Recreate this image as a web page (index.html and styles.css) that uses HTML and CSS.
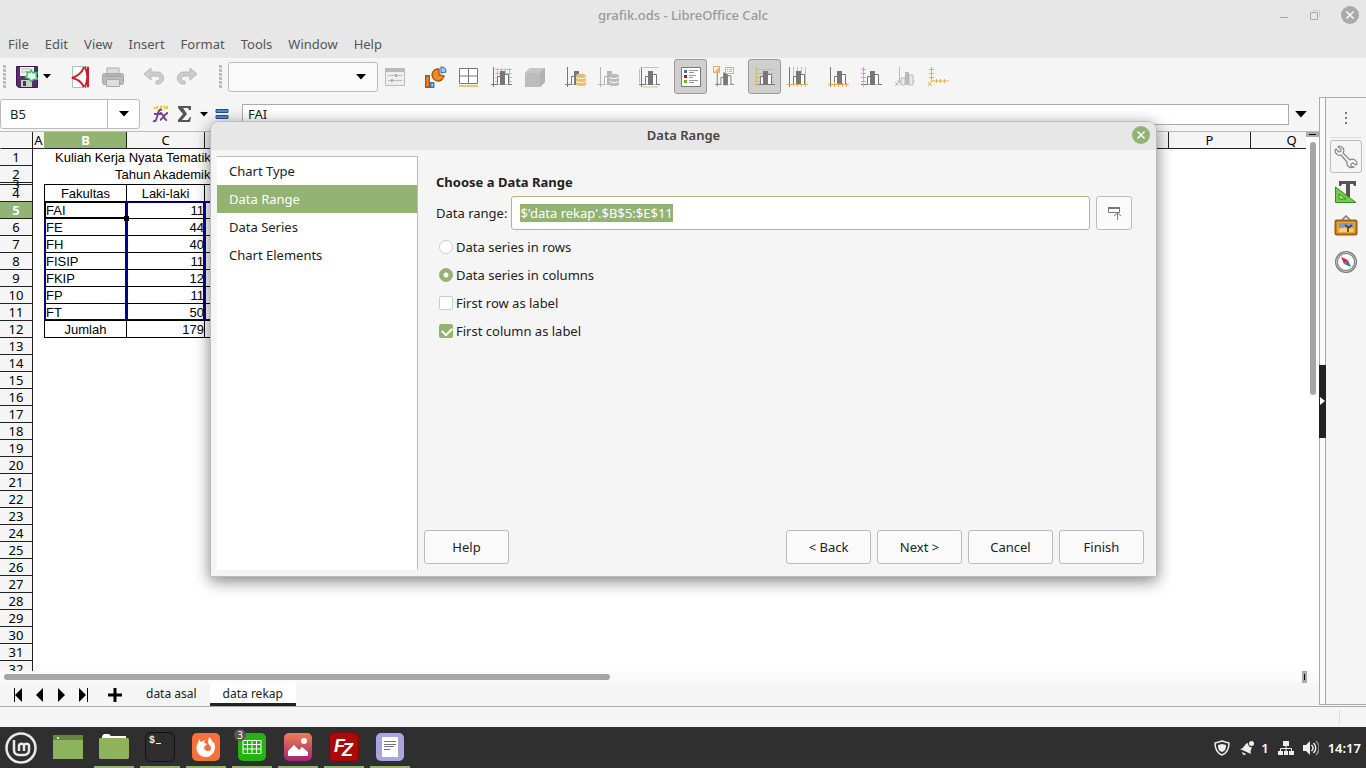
FILE: index.html
```html
<!DOCTYPE html>
<html lang="en">
  <head>
    <meta charset="UTF-8" />
    <meta name="viewport" content="width=device-width, initial-scale=1.0" />
    <title>grafik.ods - LibreOffice Calc</title>
    <link rel="stylesheet" href="styles.css">
  </head>
  <body>
    <svg class="symbols" aria-hidden="true">
      <symbol id="axes" viewBox="0 0 22 22">
        <path d="M2.5 1v20M0 18.500h21" fill="none" stroke="#777" />
      </symbol>
      <symbol id="bars" viewBox="0 0 22 22">
        <path d="M6.500 18.500v-8h4v8M13.500 18.500v-10h4v10" fill="#fff" stroke="#777" />
        <path d="M9 5h5v14H9z" fill="#777" />
      </symbol>
      <symbol id="database" viewBox="0 0 22 22">
        <path d="M11 10c0-3 10-3 10 0v9c0 3-10 3-10 0z" />
        <path d="M11 11c1 2 9 2 10 0M11 15c1 2 9 2 10 0M11 19c1 2 9 2 10 0" fill="none" stroke="#fff" />
      </symbol>
      <symbol id="arrow" viewBox="0 0 10 6">
        <path d="M0 0h10L5 5.500z" />
      </symbol>
    </svg>

    <header class="titlebar">
      <h1 class="window-title">grafik.ods - LibreOffice Calc</h1>
      <div class="window-buttons">
        <button aria-label="Minimize"><svg width="10" height="18"><path d="M1 11.500h8" stroke="#aaa" /></svg></button>
        <button aria-label="Maximize"><svg width="12" height="18" fill="none" stroke="#bbb"><path d="M4 4.500h6.500V11" stroke="#ccc" /><path d="M1.500 6.500h7v7h-7z" stroke="#aaa" /></svg></button>
        <button aria-label="Close"><svg width="18" height="18"><circle cx="9" cy="9" r="9" fill="#aaa" /><path d="M5.500 5.500l7 7M12.500 5.500l-7 7" stroke="#fff" stroke-width="1.500" /></svg></button>
      </div>
    </header>

    <nav class="menubar">
      <a href="#">File</a>
      <a href="#">Edit</a>
      <a href="#">View</a>
      <a href="#">Insert</a>
      <a href="#">Format</a>
      <a href="#">Tools</a>
      <a href="#">Window</a>
      <a href="#">Help</a>
    </nav>

    <div class="toolbar">
      <span class="grip grip-first"></span>
      <div class="tools">
        <button class="tool" aria-label="Save">
          <svg viewBox="0 0 22 22">
            <path d="M.5.5h21v21H3l-2.500-2z" fill="#5b2d6e" stroke="#3c1a4c" />
            <path d="M4 1h14v9H4z" fill="#f2f0f3" /><path d="M5 3h9M5 6h8" stroke="#bbb" />
            <path d="M5 14h11v7H5z" fill="#ccc" /><path d="M7 15h3v5H7z" fill="#444" />
            <path d="M15 4l2 3 4-.5-1 3.500 1.500 3-4 .5-2.500 2-2-3-3.500-1 2-2.500-.5-3 3 .5z" fill="#e8ffe8" stroke="#36c26a" stroke-width="1.500" />
          </svg>
        </button>
        <button class="tool-menu" aria-label="Save options"><svg class="arrow-small"><use href="#arrow" /></svg></button>
      </div>
      <div class="tools">
        <button class="tool" aria-label="Export as PDF">
          <svg viewBox="0 0 22 22">
            <path d="M3.500.5h16v21h-16z" fill="#fff" stroke="#bbb" />
            <path d="M15 1c-2 6-6 9-12 11 6 1 10 5 12 9M19 1v20M16 1c3 6 3 13 0 20" fill="none" stroke="#c8202a" stroke-width="2" />
          </svg>
        </button>
        <button class="tool" aria-label="Print">
          <svg viewBox="0 0 22 22">
            <path d="M5 8V2h12v6" fill="#ddd" stroke="#aaa" />
            <rect x=".5" y="7.500" width="21" height="11" rx="2" fill="#bbb" stroke="#a5a5a5" />
            <path d="M3 10h16" stroke="#999" /><path d="M4.500 13.500h13v7h-13z" fill="#ddd" stroke="#aaa" />
          </svg>
        </button>
      </div>
      <div class="tools">
        <button class="tool" aria-label="Undo">
          <svg viewBox="0 0 22 22"><path d="M1 8l7-6v4h6c9 0 9 13-1 12v-3c5 0 5-5 0-5H8v4z" fill="#ccc" stroke="#b9b9b9" /></svg>
        </button>
        <button class="tool" aria-label="Redo">
          <svg viewBox="0 0 22 22"><path d="M21 8l-7-6v4H8c-9 0-9 13 1 12v-3c-5 0-5-5 0-5h5v4z" fill="#ccc" stroke="#b9b9b9" /></svg>
        </button>
      </div>
      <span class="grip grip-second"></span>
      <div class="combo">
        <select aria-label="Select chart element"><option></option></select>
        <svg class="arrow-combo"><use href="#arrow" /></svg>
      </div>
      <div class="tools">
        <button class="tool" aria-label="Format selection">
          <svg viewBox="0 0 22 22"><path d="M1.500 2.500h19v17h-19z" fill="#eee" stroke="#bbb" /><path d="M1 2h20v4H1z" fill="#bbb" /><path d="M4 9.500h14M4 14.500h14" stroke="#bbb" /><path d="M12 8v3M8 13v3" stroke="#aaa" stroke-width="2" /></svg>
        </button>
      </div>
      <div class="tools">
        <button class="tool" aria-label="Chart type">
          <svg viewBox="0 0 22 22">
            <path d="M.7 9.700h3.600v11.600H.7z" fill="#f08a24" stroke="#a85508" stroke-width="1.400" />
            <path d="M5.700 16.700h3v4.600h-3z" fill="#a7cbf2" stroke="#3f78b8" stroke-width="1.400" />
            <path d="M14 3a6 6 0 1 0 5 7l-5-1z" fill="#f08a24" stroke="#a85508" stroke-width="1.400" />
            <path d="M16 1c3 0 5 2 5 5l-5 1z" fill="#a7cbf2" stroke="#3f78b8" stroke-width="1.200" />
          </svg>
        </button>
        <button class="tool" aria-label="Chart area">
          <svg viewBox="0 0 22 22"><path d="M1.500 2.500h18v15h-18zM1.500 10h18M10.500 2v15" fill="#fff" stroke="#777" /><path d="M1 20h19" stroke="#e9c27b" stroke-width="2" /></svg>
        </button>
        <button class="tool" aria-label="Chart wall">
          <svg viewBox="0 0 22 22"><path d="M6.500 2v16M10.500 2v16M14.500 2v16M18.500 2v16M4 3.500h17M4 7.500h17M4 11.500h17M4 15.500h17" stroke="#e9bd70" /><use href="#axes" /><use href="#bars" /></svg>
        </button>
        <button class="tool" aria-label="3D view">
          <svg viewBox="0 0 22 22"><path d="M1 7l5-5h15v14l-5 5H1z" fill="#bcbcbc" /><path d="M1 7l5-5h15l-5 5z" fill="#c6c6c6" /><path d="M16 7l5-5v14l-5 5z" fill="#b2b2b2" /></svg>
        </button>
      </div>
      <div class="tools">
        <button class="tool" aria-label="Data ranges">
          <svg viewBox="0 0 22 22"><use href="#axes" /><use href="#bars" /><path d="M12 8h8v13h-8z" fill="#f5f5f5" /><use href="#database" fill="#e9bd70" /></svg>
        </button>
        <button class="tool" aria-label="Data table">
          <svg viewBox="0 0 22 22"><g opacity=".5"><use href="#axes" /><use href="#bars" /></g><path d="M12 8h8v13h-8z" fill="#f5f5f5" /><use href="#database" fill="#bbb" /></svg>
        </button>
      </div>
      <div class="tools">
        <button class="tool" aria-label="Titles">
          <svg viewBox="0 0 22 22"><path d="M4 1.500h16M.5 3v14M4 21h15" stroke="#e9bd70" /><use href="#axes" /><use href="#bars" /></svg>
        </button>
      </div>
      <div class="tools">
        <button class="tool pressed" aria-label="Legend">
          <svg viewBox="0 0 22 22"><path d="M1.500 1.500h19v19h-19z" fill="#fff" stroke="#777" /><path d="M4 4h3v3H4z" fill="#3d6fa8" /><path d="M4 9h3v3H4z" fill="#b31217" /><path d="M4 14h3v3H4z" fill="#69b71e" /><path d="M9 4.500h9M9 6.500h5M9 9.500h7M9 11.500h4M9 14.500h9M9 16.500h5" stroke="#999" /></svg>
        </button>
        <button class="tool" aria-label="Legend position">
          <svg viewBox="0 0 22 22"><use href="#axes" x="2" y="1" width="20" height="21" /><use href="#bars" x="2" y="2" width="20" height="20" /><path d="M.5.5h6v6h-6zM12.500 1.500h8v6h-8z" fill="#fff" stroke="#e3ae55" /><path d="M14 3.500h1M16 3.500h3M14 5.500h1M16 5.500h3" stroke="#e3ae55" /><path d="M1 6l5-5v5z" fill="#e9bd70" /></svg>
        </button>
      </div>
      <div class="tools">
        <button class="tool pressed" aria-label="Horizontal grids">
          <svg viewBox="0 0 22 22"><path d="M1 3.500h19M1 7.500h19M1 11.500h19M1 15.500h19" stroke="#dfb56c" /><path d="M2.500 1v20M0 18.500h21" stroke="#dfb56c" /><use href="#bars" /><path d="M4 18.500h17" stroke="#777" /></svg>
        </button>
        <button class="tool" aria-label="Vertical grids">
          <svg viewBox="0 0 22 22"><path d="M6.500 1v20M10.500 1v20M14.500 1v20M18.500 1v20" stroke="#e9bd70" /><use href="#axes" /><use href="#bars" /><path d="M0 18.500h21" stroke="#e3ae55" /></svg>
        </button>
      </div>
      <div class="tools">
        <button class="tool" aria-label="X axis">
          <svg viewBox="0 0 22 22"><use href="#axes" /><use href="#bars" /><path d="M0 18.500h21M6.500 16v5M10.500 17v4M14.500 17v4M18.500 17v4" stroke="#e3ae55" /></svg>
        </button>
        <button class="tool" aria-label="Y axis">
          <svg viewBox="0 0 22 22"><use href="#axes" /><use href="#bars" /><path d="M2.500 1v20M0 3.500h5M0 7.500h5M0 11.500h5M0 15.500h5" stroke="#e3ae55" /></svg>
        </button>
        <button class="tool" aria-label="Z axis">
          <svg viewBox="0 0 22 22"><g opacity=".45"><path d="M5.500 1v14M1 20l5-5h15M1 16l4 4M3 14l4 4" fill="none" stroke="#777" /><path d="M7 12h4v7H7zM15 9h4v10h-4z" fill="#ddd" stroke="#777" /><path d="M11 6h4v13h-4z" fill="#777" /></g></svg>
        </button>
        <button class="tool" aria-label="All axes">
          <svg viewBox="0 0 22 22"><path d="M4.500 1v14h17M1 20l4-5M2 3.500h5M2 7.500h5M2 11.500h5M9.500 13v4M13.500 13v4M17.500 13v4M1 16l4 4" fill="none" stroke="#e3ae55" /></svg>
        </button>
      </div>
    </div>

    <div class="workspace">
      <main class="document">
        <div class="formula-bar">
          <div class="name-box">
            <input type="text" value="B5" aria-label="Name Box">
            <button aria-label="Show names"><svg class="arrow-combo"><use href="#arrow" /></svg></button>
          </div>
          <button class="formula-button" aria-label="Function Wizard">
            <svg width="18" height="18" viewBox="0 0 18 18"><path d="M3 2l1 2M6 1v3M9 3l2-2M13 1l1 3M16 1v3" stroke="#f0c63c" stroke-width="2" /><path d="M2 16c3 1 3-1 4-4l1-4c1-3 2-4 4-3M3 9h7M9 8c3-1 4 8 7 7M17 8c-3 0-5 6-8 7" fill="none" stroke="#75448b" stroke-width="2" /></svg>
          </button>
          <button class="formula-button" aria-label="Select Function">
            <svg width="16" height="18" viewBox="0 0 16 18"><path d="M2 1h12v4h-2l-1-2H6l4 6-5 6h6l2-3h1l-1 5H1v-2l5-6-5-6V1z" fill="#555" /></svg>
          </button>
          <svg class="arrow-small"><use href="#arrow" /></svg>
          <button class="formula-button" aria-label="Formula">
            <svg width="14" height="10" viewBox="0 0 14 10"><path d="M1 .5h12v3H1zM1 6.500h12v3H1z" fill="#5a8bc9" stroke="#234d87" /></svg>
          </button>
          <input class="formula-input" type="text" value="FAI" aria-label="Input line">
          <svg class="arrow-formula"><use href="#arrow" /></svg>
        </div>

        <div class="sheet-area">
          <div class="sheet">
            <table class="cells">
              <colgroup>
                <col class="col-head"><col class="col-a"><col class="col-std"><col class="col-c"><col class="col-d">
                <col class="col-std" span="13">
              </colgroup>
              <thead>
                <tr>
                  <th></th><th>A</th><th class="current">B</th><th>C</th><th>D</th><th>E</th><th>F</th><th>G</th><th>H</th><th>I</th><th>J</th><th>K</th><th>L</th><th>M</th><th>N</th><th>O</th><th>P</th><th>Q</th>
                </tr>
              </thead>
              <tbody>
                <tr><th>1</th><td></td><td class="heading" colspan="4">Kuliah Kerja Nyata Tematik</td></tr>
                <tr><th>2</th><td></td><td class="heading subheading" colspan="4">Tahun Akademik</td></tr>
                <tr class="thin"><th>3</th><td></td><td class="box-top" colspan="4"></td></tr>
                <tr class="center"><th>4</th><td></td><td class="box">Fakultas</td><td class="box">Laki-laki</td><td class="box"></td><td class="box"></td></tr>
                <tr class="range first"><th class="current">5</th><td></td><td class="box cursor">FAI<span class="handle"></span></td><td class="box">11</td><td class="box"></td><td class="box"></td></tr>
                <tr class="range"><th>6</th><td></td><td class="box">FE</td><td class="box">44</td><td class="box"></td><td class="box"></td></tr>
                <tr class="range"><th>7</th><td></td><td class="box">FH</td><td class="box">40</td><td class="box"></td><td class="box"></td></tr>
                <tr class="range"><th>8</th><td></td><td class="box">FISIP</td><td class="box">11</td><td class="box"></td><td class="box"></td></tr>
                <tr class="range"><th>9</th><td></td><td class="box">FKIP</td><td class="box">12</td><td class="box"></td><td class="box"></td></tr>
                <tr class="range"><th>10</th><td></td><td class="box">FP</td><td class="box">11</td><td class="box"></td><td class="box"></td></tr>
                <tr class="range last"><th>11</th><td></td><td class="box">FT</td><td class="box">50</td><td class="box"></td><td class="box"></td></tr>
                <tr class="total"><th>12</th><td></td><td class="box">Jumlah</td><td class="box">179</td><td class="box"></td><td class="box"></td></tr>
                <tr><th>13</th></tr>
                <tr><th>14</th></tr>
                <tr><th>15</th></tr>
                <tr><th>16</th></tr>
                <tr><th>17</th></tr>
                <tr><th>18</th></tr>
                <tr><th>19</th></tr>
                <tr><th>20</th></tr>
                <tr><th>21</th></tr>
                <tr><th>22</th></tr>
                <tr><th>23</th></tr>
                <tr><th>24</th></tr>
                <tr><th>25</th></tr>
                <tr><th>26</th></tr>
                <tr><th>27</th></tr>
                <tr><th>28</th></tr>
                <tr><th>29</th></tr>
                <tr><th>30</th></tr>
                <tr><th>31</th></tr>
                <tr><th>32</th></tr>
              </tbody>
            </table>
          </div>
          <div class="vscroll">
            <span class="split"></span>
            <span class="vthumb"></span>
          </div>
        </div>
        <div class="hscroll">
          <span class="hthumb"></span>
          <span class="hsplit"></span>
        </div>

        <div class="sheet-tabs">
          <button class="tab-nav" aria-label="First sheet"><svg width="10" height="14"><path d="M1.500 0v14" stroke="#000" /><path d="M9 0v14L2 7z" /></svg></button>
          <button class="tab-nav" aria-label="Previous sheet"><svg width="10" height="14"><path d="M8 0v14L1 7z" /></svg></button>
          <button class="tab-nav" aria-label="Next sheet"><svg width="10" height="14"><path d="M1 0v14l7-7z" /></svg></button>
          <button class="tab-nav" aria-label="Last sheet"><svg width="10" height="14"><path d="M0 0v14l7-7z" /><path d="M8.500 0v14" stroke="#000" /></svg></button>
          <button class="tab-nav tab-add" aria-label="Add sheet"><svg width="16" height="16"><path d="M8 1v14M1 8h14" stroke="#000" stroke-width="3" /></svg></button>
          <button class="sheet-tab">data asal</button>
          <button class="sheet-tab active">data rekap</button>
        </div>
      </main>

      <div class="sidebar-splitter">
        <button aria-label="Hide sidebar"><svg width="5" height="8"><path d="M0 0v8l5-4z" fill="#fff" /></svg></button>
      </div>
      <aside class="sidebar">
        <button class="side-dots" aria-label="Sidebar settings"><svg width="4" height="14" fill="#777"><path d="M1 1h2v2H1zM1 6h2v2H1zM1 11h2v2H1z" /></svg></button>
        <button class="side-button side-active" aria-label="Properties">
          <svg width="24" height="24" viewBox="0 0 24 24"><path d="M5 1c4 0 6 4 4 7l7 7c3-2 7 0 7 4l-1 1-3-2-2 1v2l3 1c-4 2-8-1-7-5L7 10c-3 1-6-1-6-5l1-1 3 3 2-1V4L4 2z" fill="#f3f3f3" stroke="#888" stroke-width="1.200" /></svg>
        </button>
        <button class="side-button" aria-label="Styles">
          <svg width="24" height="24" viewBox="0 0 24 24"><path d="M5 1h17v5h-2l-1-2h-3v14h-4V4H8L7 6H5z" fill="#555" /><path d="M1.500 7v15.500H22z" fill="#74cc48" stroke="#3a8a1c" /><path d="M5 14v5h7z" fill="#b5e89b" stroke="#3a8a1c" /></svg>
        </button>
        <button class="side-button" aria-label="Gallery">
          <svg width="24" height="24" viewBox="0 0 24 24"><path d="M8 5l4-4 4 4" fill="none" stroke="#777" stroke-width="1.500" /><rect x="1.500" y="5.500" width="21" height="14" rx="1" fill="#e9a13a" stroke="#a0600d" stroke-width="2" /><path d="M5 8h14v9H5z" fill="#7e9bc0" /><path d="M5 14c4-3 8 0 14-1v4H5z" fill="#ffcf6b" /><path d="M14 17v-5l-3-2M14 13l4-3" fill="none" stroke="#493321" stroke-width="1.500" /></svg>
        </button>
        <button class="side-button" aria-label="Navigator">
          <svg width="24" height="24" viewBox="0 0 24 24"><circle cx="12" cy="12" r="9.500" fill="#fff" stroke="#777" stroke-width="3" /><circle cx="12" cy="12" r="9.500" fill="none" stroke="#ccc" /><path d="M7 7l7 3-4 4z" fill="#d42c2c" /><path d="M17 17l-7-3 4-4z" fill="#4d6fa8" /></svg>
        </button>
      </aside>
    </div>

    <div class="statusbar"><span></span></div>

    <footer class="taskbar">
      <div class="tasks">
        <button class="menu" aria-label="Menu">
          <svg width="32" height="32" viewBox="0 0 32 32" fill="none" stroke="#e8e8e8"><circle cx="16" cy="16" r="14.500" stroke-width="2.500" /><path d="M9 8v10c0 3 2 5 5 5h5c3 0 5-2 5-5v-4c0-3-5-3-5 0v5M19 14c0-3-5-3-5 0v5" stroke-width="2.500" /></svg>
        </button>
        <button class="task" aria-label="Show desktop">
          <svg width="30" height="24" viewBox="0 0 30 24"><path d="M0 0h30v24H0z" fill="#8fb25c" /><path d="M0 0h30v5H0z" fill="#68853f" /><circle cx="5" cy="3" r="1" fill="#fff" /></svg>
        </button>
        <button class="task open" aria-label="Files">
          <svg width="30" height="26" viewBox="0 0 30 26"><path d="M3 4V2l2-2h5l2 2h15v4H3z" fill="#fff" /><path d="M0 5l1-1h28l1 1v19l-1 1H1l-1-1z" fill="#8fb25c" /></svg>
        </button>
        <button class="task open" aria-label="Terminal">
          <svg width="30" height="30" viewBox="0 0 30 30"><rect x=".5" y=".5" width="29" height="29" rx="5" fill="#2d2d2d" stroke="#111" /><text class="term-text" x="4" y="11">$</text><path d="M11 11.500h5" stroke="#eee" /></svg>
        </button>
        <button class="task open" aria-label="Firefox">
          <svg width="28" height="28" viewBox="0 0 28 28"><rect width="28" height="28" rx="5" fill="#f8703a" /><path d="M7 6l2 3 4-2-1 3 3 1-3 3c0 5 6 5 7 2 1-3-3-4-3-7l1-5c2 2 3 3 4 6l1-1c3 7-1 15-8 15-8 0-12-8-8-14z" fill="#fff" /></svg>
        </button>
        <button class="task open" aria-label="LibreOffice Calc">
          <svg width="28" height="28" viewBox="0 0 28 28"><rect width="28" height="28" rx="5" fill="#25b314" /><path d="M5 7.500h18v13H5zM5 11.500h18M5 16h18M9.500 8v12M14 8v12M18.500 8v12" fill="none" stroke="#fff" /></svg>
          <span class="count">3</span>
        </button>
        <button class="task open" aria-label="Image viewer">
          <svg width="28" height="28" viewBox="0 0 28 28"><defs><linearGradient id="sky" x2="0" y2="1"><stop stop-color="#ee8052" /><stop offset="1" stop-color="#a0266e" /></linearGradient></defs><rect width="28" height="28" rx="5" fill="url(#sky)" /><circle cx="20" cy="8" r="3" fill="#fff" /><path d="M4 23v-5l6-6 5 5 3-3 6 5v4z" fill="#fff" /></svg>
        </button>
        <button class="task open" aria-label="FileZilla">
          <svg width="30" height="30" viewBox="0 0 30 30"><rect x=".5" y=".5" width="29" height="29" rx="5" fill="#a90a0a" stroke="#800" /><text class="fz-text" x="5" y="20">F</text><text class="fz-text" x="13" y="24">Z</text></svg>
        </button>
        <button class="task open" aria-label="Text editor">
          <svg width="28" height="28" viewBox="0 0 28 28"><rect width="28" height="28" rx="5" fill="#a9a6dc" /><path d="M6 4h16v20H6z" fill="#fff" /><path d="M8 8.500h12M8 11.500h12M8 13.500h10M8 16.500h6" stroke="#777" /></svg>
        </button>
      </div>
      <div class="tray">
        <svg width="16" height="16" viewBox="0 0 16 16"><path d="M8 1l7 2c0 6-2 10-7 12C3 13 1 9 1 3z" fill="none" stroke="#eee" stroke-width="1.500" /><path d="M8 4l4 1c0 4-1 6-4 7-3-1-4-3-4-7z" fill="#eee" /></svg>
        <span class="notice">
          <svg width="16" height="16" viewBox="0 0 16 16" fill="#eee"><path d="M1 9c4 0 4-5 8-6 0 3 2 5 4 4-1 3-2 4-1 7z" /><circle cx="12.500" cy="3.500" r="2.500" /><path d="M3 12l4 2c-1 2-4 1-4-2z" /></svg>
          1
        </span>
        <svg width="16" height="16" viewBox="0 0 16 16" fill="#eee"><path d="M5 1h6v5H5zM0 11h5v4H0zM6 11h4v4H6zM11 11h5v4h-5z" /><path d="M8 5v6M2.500 11V8.500h11V11" fill="none" stroke="#eee" /></svg>
        <svg width="16" height="16" viewBox="0 0 16 16"><path d="M0 5h3l4-4v14l-4-4H0z" fill="#eee" /><path d="M8.500 5c2 2 2 4 0 6M10.500 3c3 3 3 7 0 10" fill="none" stroke="#eee" stroke-width="1.500" /><path d="M13 1c4 4 4 10 0 14" fill="none" stroke="#888" stroke-width="1.500" /></svg>
        <time>14:17</time>
      </div>
    </footer>

    <section class="dialog" role="dialog" aria-labelledby="dialog-title">
      <div class="dialog-title">
        <h2 id="dialog-title">Data Range</h2>
        <button aria-label="Close dialog"><svg width="18" height="18"><circle cx="9" cy="9" r="9" fill="#92b372" /><path d="M5.500 5.500l7 7M12.500 5.500l-7 7" stroke="#fff" stroke-width="1.500" /></svg></button>
      </div>
      <div class="dialog-body">
        <nav class="steps">
          <a href="#">Chart Type</a>
          <a href="#" class="selected">Data Range</a>
          <a href="#">Data Series</a>
          <a href="#">Chart Elements</a>
        </nav>
        <form class="step-form">
          <div class="fields">
            <h3>Choose a Data Range</h3>
            <div class="range-row">
              <label for="range">Data range:</label>
              <input type="text" id="range" class="js-range range-input" value="$'data rekap'.$B$5:$E$11">
              <button type="button" class="shrink" aria-label="Select data range">
                <svg width="16" height="16" viewBox="0 0 16 16" fill="none"><path d="M2.500 2.500h11v5h-11z" fill="#fff" stroke="#777" /><path d="M2 3h12" stroke="#777" stroke-width="2" /><path d="M11.500 15V8M8 11l3.500-3 3.500 3" stroke="#4a86c8" /></svg>
              </button>
            </div>
            <label class="choice"><input type="radio" name="series">Data series in rows</label>
            <label class="choice"><input type="radio" name="series" checked>Data series in columns</label>
            <label class="choice"><input type="checkbox">First row as label</label>
            <label class="choice"><input type="checkbox" checked>First column as label</label>
          </div>
          <div class="actions">
            <button type="button" class="help">Help</button>
            <button type="button">&lt; Back</button>
            <button type="button">Next &gt;</button>
            <button type="button">Cancel</button>
            <button type="button">Finish</button>
          </div>
        </form>
      </div>
    </section>

    <script>
      const range = document.querySelector('.js-range');
      range.focus();
      range.select();
    </script>
  </body>
</html>
```

FILE: styles.css
```css
* {
  box-sizing: border-box;
}
body {
  margin: 0;
  height: 100vh;
  display: flex;
  flex-direction: column;
  overflow: hidden;
  background: #f5f5f5;
  color: #222;
  font-family: "Noto Sans", sans-serif;
  font-size: 13px;
}
button, input, select {
  font: inherit;
  color: inherit;
}
button {
  padding: 0;
  border: none;
  background: none;
}
a {
  color: inherit;
  text-decoration: none;
}
h1, h2, h3 {
  margin: 0;
  font-size: 13px;
}
svg {
  display: block;
  flex: none;
}
.symbols {
  position: absolute;
  width: 0;
  height: 0;
}

/* window frame */
.titlebar {
  display: grid;
  grid-template-columns: 1fr auto 1fr;
  align-items: center;
  height: 31px;
  padding: 0 7px 2px;
  background: #e7e7e7;
  color: #999;
}
.window-title {
  grid-column: 2;
  font-weight: 500;
}
.window-buttons {
  display: flex;
  justify-content: flex-end;
  gap: 20px;
}
.menubar {
  display: flex;
  align-items: center;
  gap: 16px;
  height: 27px;
  padding: 0 8px 2px;
  background: #e7e7e7;
  color: #555;
}

/* toolbar */
.toolbar {
  display: flex;
  align-items: center;
  gap: 8px;
  height: 39px;
  padding: 0 3px 2px;
}
.tools {
  display: flex;
}
.grip {
  width: 3px;
  height: 24px;
  background: repeating-linear-gradient(#bbb 0 3px, transparent 3px 4px);
}
.grip-first {
  margin-right: -4px;
}
.grip-second {
  margin-right: -2px;
  margin-left: 8px;
}
.tool {
  display: flex;
  align-items: center;
  justify-content: center;
  width: 33px;
  height: 35px;
  border: 1px solid transparent;
  border-radius: 3px;
}
.tool svg {
  width: 22px;
  height: 22px;
}
.pressed {
  background: #cfcfcf;
  border-color: #999;
}
.tool-menu {
  width: 12px;
}
.arrow-small {
  width: 8px;
  height: 5px;
}
.arrow-combo {
  width: 10px;
  height: 6px;
}
.combo {
  display: grid;
  grid-template-columns: 1fr 22px;
  align-items: center;
  width: 150px;
  height: 30px;
  margin-right: -8px;
}
.combo select {
  grid-area: 1 / 1 / 2 / 3;
  width: 100%;
  height: 30px;
  appearance: none;
  border: 1px solid #bbb;
  border-radius: 3px;
  background: #fafafa;
}
.combo svg {
  grid-area: 1 / 2;
}

/* document */
.workspace {
  flex: 1;
  display: flex;
  min-height: 0;
}
.document {
  flex: 1;
  display: flex;
  flex-direction: column;
  min-width: 0;
}
.formula-bar {
  display: flex;
  align-items: center;
  gap: 6px;
  height: 34px;
  flex: none;
  padding-right: 12px;
}
.name-box {
  display: flex;
  width: 140px;
  height: 30px;
  margin-right: 4px;
  border: 1px solid #bbb;
  border-radius: 3px;
  background: #fff;
}
.name-box input {
  flex: 1;
  min-width: 0;
  padding: 0 9px;
  border: none;
  background: none;
}
.name-box button {
  width: 32px;
  padding: 0 11px;
  border-left: 1px solid #bbb;
}
.formula-button {
  padding: 0 1px;
}
.formula-input {
  flex: 1;
  height: 21px;
  margin-left: 6px;
  padding: 0 5px;
  border: 1px solid #aaa;
  background: #fff;
}
.arrow-formula {
  width: 12px;
  height: 7px;
}
.sheet-area {
  flex: 1;
  display: flex;
  min-height: 0;
  border-top: 1px solid #bbb;
}
.sheet {
  flex: 1;
  overflow: hidden;
  background: #fff;
}

/* cells */
.cells {
  width: 1332px;
  table-layout: fixed;
  border-spacing: 0;
  font-family: "Liberation Sans", sans-serif;
  line-height: 16px;
  color: #000;
}
.col-head {
  width: 33px;
}
.col-a {
  width: 11px;
}
.col-std {
  width: 82px;
}
.col-c {
  width: 78px;
}
.col-d {
  width: 62px;
}
.cells th, .cells td {
  height: 17px;
  padding: 0;
  white-space: nowrap;
}
.cells th {
  border-right: 1px solid #222;
  border-bottom: 1px solid #222;
  background: #f5f5f5;
  font-family: "Noto Sans", sans-serif;
  font-weight: 400;
}
.cells thead th {
  border-right: none;
  border-left: 1px solid #222;
}
.cells thead th:first-child, .cells thead th.current {
  border-left-color: transparent;
}
.cells thead th:first-child {
  border-right: 1px solid #222;
}
.cells thead th:nth-child(2) {
  border-left: none;
}
.cells th.current {
  background: #92b372;
  color: #fff;
  font-weight: 700;
}
.cells .heading {
  padding-left: 11px;
}
.cells .subheading {
  padding-left: 71px;
}
.cells .thin th, .cells .thin td {
  height: 2px;
  line-height: 0;
}
.cells .box-top {
  border-bottom: 1px solid #000;
}
.cells .box {
  padding-top: 2px;
  border-left: 1px solid #000;
  border-bottom: 1px solid #000;
  line-height: 14px;
}
.center .box {
  text-align: center;
}
.range .box {
  border-left-color: #00008b;
  text-align: right;
  box-shadow: inset 1px 0 #00008b, inset -1px 0 #00008b;
}
.cells .range .box:nth-child(3) {
  padding-left: 1px;
  text-align: left;
}
.range.first .box {
  box-shadow: inset 1px 0 #00008b, inset -1px 0 #00008b, inset 0 1px #00008b;
}
.range.last .box {
  box-shadow: inset 1px 0 #00008b, inset -1px 0 #00008b, inset 0 -1px #00008b;
}
.range .cursor.box {
  position: relative;
  border-color: #000;
  box-shadow: inset 0 0 0 1px #000;
}
.handle {
  position: absolute;
  right: -3px;
  bottom: -3px;
  width: 5px;
  height: 5px;
  background: #000;
}
.total .box {
  text-align: right;
}
.total .box:nth-child(3) {
  text-align: center;
}

/* scrollbars */
.vscroll {
  width: 13px;
  background: #fff;
}
.split {
  display: block;
  height: 5px;
  margin-bottom: 5px;
  border: solid #aaa;
  border-width: 2px 3px;
  background: #000;
}
.vthumb {
  display: block;
  width: 6px;
  height: 47%;
  margin-left: 4px;
  border-radius: 3px;
  background: #a5a5a5;
}
.hscroll {
  display: flex;
  align-items: center;
  justify-content: space-between;
  height: 12px;
  padding: 0 12px 0 4px;
  background: #fafafa;
}
.hthumb {
  width: 46.5%;
  height: 6px;
  border-radius: 3px;
  background: #a5a5a5;
}
.hsplit {
  width: 5px;
  height: 12px;
  border: solid #aaa;
  border-width: 3px 2px;
  background: #000;
}

/* sheet tabs */
.sheet-tabs {
  display: flex;
  align-items: center;
  height: 23px;
  padding-left: 13px;
}
.tab-nav {
  margin-right: 12px;
}
.tab-add {
  margin-right: 10px;
  margin-left: 6px;
}
.sheet-tab {
  height: 23px;
  padding: 0 13px;
  border-bottom: 3px solid transparent;
  font-size: 12px;
}
.sheet-tab.active {
  background: #fff;
  border-color: #222;
}

/* sidebar */
.sidebar-splitter {
  display: flex;
  align-items: center;
  width: 7px;
  margin-bottom: 1px;
  border: 1px solid #aaa;
  background: #fafafa;
}
.sidebar-splitter button {
  flex: none;
  display: flex;
  align-items: center;
  width: 7px;
  height: 73px;
  margin: 0 -1px;
  padding-left: 1px;
  background: #222;
}
.sidebar {
  display: flex;
  flex-direction: column;
  align-items: center;
  gap: 2px;
  width: 40px;
  margin-bottom: 1px;
  border-top: 1px solid #aaa;
  border-bottom: 1px solid #aaa;
}
.side-dots {
  display: flex;
  align-items: center;
  justify-content: center;
  width: 32px;
  height: 40px;
  border-bottom: 1px solid #ddd;
}
.side-button {
  display: flex;
  align-items: center;
  justify-content: center;
  width: 32px;
  height: 33px;
  border: 1px solid transparent;
  border-radius: 3px;
}
.side-active {
  border-color: #bbb;
}
.statusbar {
  display: flex;
  justify-content: flex-end;
  align-items: center;
  height: 21px;
  padding-right: 26px;
  border-top: 1px solid #aaa;
}
.statusbar span {
  width: 1px;
  height: 14px;
  background: #ddd;
}

/* taskbar */
.taskbar {
  display: flex;
  justify-content: space-between;
  height: 41px;
  background: #2f2f2f;
  color: #fff;
}
.tasks {
  display: flex;
  gap: 6px;
}
.menu {
  width: 42px;
  padding-left: 5px;
}
.task {
  position: relative;
  display: flex;
  align-items: center;
  justify-content: center;
  width: 40px;
  border-bottom: 2px solid transparent;
}
.task.open {
  border-color: #92b372;
}
.count {
  position: absolute;
  top: 2px;
  left: 2px;
  width: 12px;
  height: 12px;
  border-radius: 6px;
  background: #555;
  font-size: 10px;
  line-height: 12px;
}
.term-text {
  fill: #eee;
  font: 700 10px "Liberation Mono", monospace;
}
.fz-text {
  fill: #fff;
  font: italic 700 18px "Liberation Sans", sans-serif;
}
.tray {
  display: flex;
  align-items: center;
  gap: 9px;
  padding-right: 5px;
  font-weight: 600;
}
.notice {
  display: flex;
  align-items: center;
  gap: 6px;
}

/* chart wizard */
.dialog {
  position: absolute;
  top: 121px;
  left: 210px;
  right: 209px;
  display: flex;
  flex-direction: column;
  border: 1px solid #bbb;
  border-radius: 9px 9px 0 0;
  background: #f5f5f5;
  box-shadow: 0 4px 16px rgba(0, 0, 0, 0.5);
  overflow: hidden;
}
.dialog-title {
  display: grid;
  grid-template-columns: 1fr auto 1fr;
  align-items: center;
  height: 28px;
  padding: 0 6px 2px;
  background: #e7e7e7;
  color: #444;
}
.dialog-title h2 {
  grid-column: 2;
  font-weight: 600;
}
.dialog-title button {
  justify-self: end;
}
.dialog-body {
  display: flex;
  padding: 6px 12px 6px 6px;
}
.steps {
  width: 201px;
  height: 414px;
  border: solid #bbb;
  border-width: 1px 1px 0 0;
  background: #fff;
}
.steps a {
  display: block;
  padding: 0 12px;
  line-height: 28px;
}
.steps .selected {
  background: #92b372;
  color: #fff;
}
.step-form {
  flex: 1;
  display: flex;
  flex-direction: column;
  justify-content: space-between;
  padding: 16px 0 6px 6px;
}
.fields {
  padding: 0 12px;
}
.fields h3 {
  line-height: 20px;
}
.range-row {
  display: flex;
  align-items: center;
  gap: 6px;
  margin: 4px 0 3px;
}
.range-row label {
  margin-right: -2px;
}
.range-input {
  flex: 1;
  height: 34px;
  padding: 0 8px;
  border: 1px solid #b0b78c;
  border-radius: 3px;
  background: #fff;
  outline: none;
}
.range-input::selection {
  background: #92b372;
  color: #fff;
}
.shrink, .actions button {
  height: 34px;
  border: 1px solid #bbb;
  border-radius: 3px;
  background: #fafafa;
}
.shrink {
  display: flex;
  align-items: center;
  justify-content: center;
  width: 36px;
}
.choice {
  display: flex;
  align-items: center;
  gap: 3px;
  width: max-content;
  height: 28px;
  padding-left: 3px;
}
.choice input {
  width: 14px;
  height: 14px;
  margin: 0;
  appearance: none;
  border: 1px solid #ccc;
  border-radius: 2px;
  background: #fff;
}
.choice input[type="radio"] {
  border-radius: 50%;
}
.choice input:checked {
  border-color: #92b372;
  background: #92b372;
}
.choice input[type="radio"]:checked {
  background: radial-gradient(#fff 2px, #92b372 3px);
}
.choice input[type="checkbox"]:checked::before {
  content: "";
  display: block;
  width: 8px;
  height: 5px;
  margin: 2px 2px 4px;
  border: solid #fff;
  border-width: 0 0 2px 2px;
  transform: rotate(-45deg);
}
.actions {
  display: flex;
  gap: 6px;
}
.actions button {
  width: 85px;
}
.actions .help {
  margin-right: auto;
}
```
